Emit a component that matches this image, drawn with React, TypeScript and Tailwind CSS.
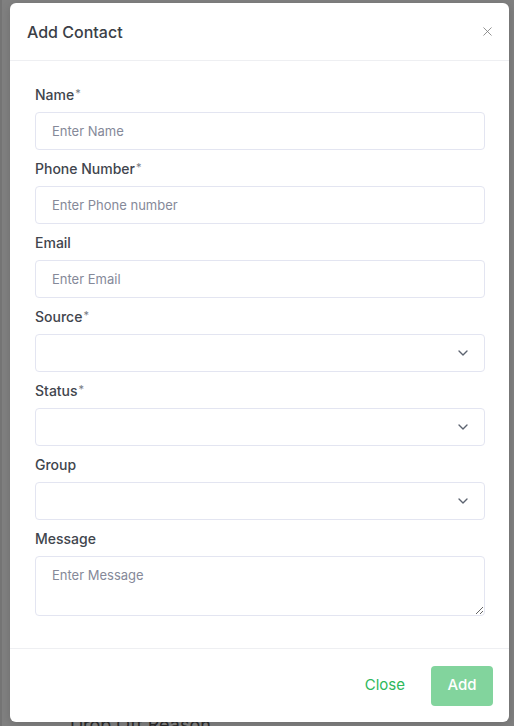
import { ChevronDown, X } from "lucide-react";

type Field = {
  label: string;
  required?: boolean;
  kind: "input" | "select" | "textarea";
  placeholder?: string;
};

const fields: Field[] = [
  { label: "Name", required: true, kind: "input", placeholder: "Enter Name" },
  { label: "Phone Number", required: true, kind: "input", placeholder: "Enter Phone number" },
  { label: "Email", kind: "input", placeholder: "Enter Email" },
  { label: "Source", required: true, kind: "select" },
  { label: "Status", required: true, kind: "select" },
  { label: "Group", kind: "select" },
  { label: "Message", kind: "textarea", placeholder: "Enter Message" },
];

function FormRow({ field, last }: { field: Field; last: boolean }) {
  return (
    <div className={last ? "" : "mb-[9px]"}>
      <label className="flex h-5 items-center text-[14px] font-medium leading-5 text-[#41454d]">
        {field.label}
        {field.required && (
          <span className="ml-px self-start text-[11px] leading-4 font-normal text-[#777b83]">*</span>
        )}
      </label>

      {field.kind === "input" && (
        <input
          type="text"
          placeholder={field.placeholder}
          className="mt-[7px] block h-[38px] w-full rounded-[4px] border border-[#e3e5f1] bg-white px-4 text-[13px] text-[#3b3f47] outline-none placeholder:text-[#858999]"
        />
      )}

      {field.kind === "select" && (
        <div className="relative mt-[7px] h-[38px] w-full rounded-[4px] border border-[#e3e5f1] bg-white">
          {/* caret sits over the field */}
          <ChevronDown
            size={16}
            strokeWidth={2}
            className="absolute right-[13px] top-[10px] text-[#5c6370]"
          />
        </div>
      )}

      {field.kind === "textarea" && (
        <textarea
          placeholder={field.placeholder}
          className="mt-[7px] block h-[60px] w-full rounded-[4px] border border-[#e3e5f1] bg-white px-4 py-2 text-[13px] leading-5 text-[#3b3f47] outline-none placeholder:text-[#858999]"
        />
      )}
    </div>
  );
}

export default function App() {
  return (
    <div
      className="relative h-[726px] w-[514px] overflow-hidden border-l-2 border-[#747474] bg-[#808080]"
      style={{ fontFamily: "Inter, 'Liberation Sans', sans-serif" }}
    >
      {/* page behind the backdrop */}
      <div className="pl-[68px] pt-[716px] text-[18px] leading-none text-[#2b2b2b]">Drop Off Reason</div>

      {/* modal */}
      <div className="absolute left-[8px] top-[3px] flex h-[719px] w-[499px] flex-col rounded-[6px] bg-white shadow-[0_2px_10px_rgba(0,0,0,0.15)]">
        <div className="flex h-[58px] shrink-0 items-center justify-between border-b border-[#eeeff2] pl-[17px] pr-[12px]">
          <h2 className="text-[16px] font-medium text-[#3b3f47]">Add Contact</h2>
          <button className="flex h-5 w-5 items-center justify-center text-[#7a7a7a]">
            <X size={15} strokeWidth={1.3} />
          </button>
        </div>

        <div className="flex-1 pl-[25px] pr-[24px] pt-[24px]">
          {fields.map((f, i) => (
            <FormRow key={f.label} field={f} last={i === fields.length - 1} />
          ))}
        </div>

        <div className="flex h-[74px] shrink-0 items-center justify-end gap-[14px] border-t border-[#eeeff2] pr-[16px]">
          <button className="h-10 rounded-[4px] px-3 text-[15px] font-normal text-[#2eb85c]">Close</button>
          <button className="h-10 w-[62px] rounded-[4px] bg-[#82d49d] text-[15px] font-medium text-white">
            Add
          </button>
        </div>
      </div>
    </div>
  );
}
